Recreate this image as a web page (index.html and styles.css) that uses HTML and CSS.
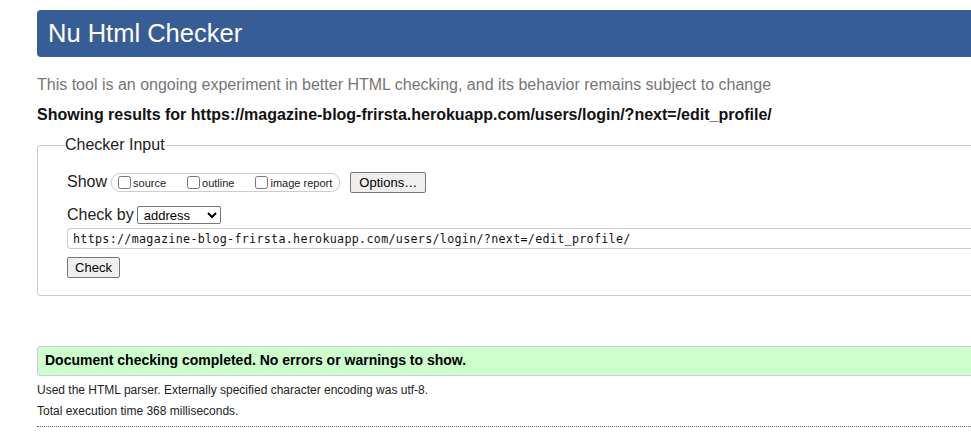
FILE: index.html
```html
<!DOCTYPE html>
<html>
<head>
<meta charset="utf-8">
<title>Nu Html Checker</title>
<link rel="stylesheet" href="styles.css">
</head>
<body>
<div class="page">
  <h1 class="banner">Nu Html Checker</h1>
  <p class="tagline">This tool is an ongoing experiment in better HTML checking, and its behavior remains subject to change</p>
  <p class="showing">Showing results for https://magazine-blog-frirsta.herokuapp.com/users/login/?next=/edit_profile/</p>
  <fieldset class="checker">
    <legend class="checker-legend">Checker Input</legend>
    <div class="show-row">
      <span class="row-label">Show</span>
      <span class="pill">
        <label class="opt"><input type="checkbox" class="cb"><span>source</span></label>
        <label class="opt"><input type="checkbox" class="cb"><span>outline</span></label>
        <label class="opt"><input type="checkbox" class="cb"><span>image report</span></label>
      </span>
      <button class="btn btn-options">Options…</button>
    </div>
    <div class="checkby-row">
      <span class="row-label">Check by</span>
      <select class="sel"><option>address</option></select>
    </div>
    <div class="url-row">
      <input class="url" type="text" value="https://magazine-blog-frirsta.herokuapp.com/users/login/?next=/edit_profile/">
    </div>
    <div class="check-row">
      <button class="btn btn-check">Check</button>
    </div>
  </fieldset>
  <p class="success">Document checking completed. No errors or warnings to show.</p>
  <p class="info">Used the HTML parser. Externally specified character encoding was utf-8.</p>
  <p class="info">Total execution time 368 milliseconds.</p>
  <hr class="dots">
</div>
</body>
</html>
```
FILE: styles.css
```css
html { overflow: hidden; }
body {
  margin: 0;
  font-family: "Liberation Sans", Arial, sans-serif;
  color: #222;
  background: #fff;
}
.page {
  width: 1000px;
  padding: 10px 0 0 37px;
}
.banner {
  margin: 0;
  height: 47px;
  box-sizing: border-box;
  background: #365d95;
  color: #fff;
  font-weight: normal;
  font-size: 25.5px;
  line-height: 47px;
  padding-left: 11px;
  border-radius: 4px 0 0 4px;
}
.tagline {
  margin: 18px 0 0;
  font-size: 16px;
  line-height: 20px;
  color: #767676;
}
.showing {
  margin: 10px 0 0;
  font-size: 16px;
  line-height: 20px;
  font-weight: bold;
  color: #111;
}
.checker {
  margin: 11px 0 0;
  padding: 18px 29px 17px 29px;
  border: 1px solid #ccc;
  border-right: none;
  border-radius: 4px 0 0 4px;
}
.checker-legend {
  padding: 0;
  margin-left: -2px;
  font-size: 16px;
  color: #222;
}
.show-row {
  display: flex;
  align-items: center;
  height: 20px;
}
.row-label {
  font-size: 16px;
  color: #222;
}
.pill {
  display: inline-flex;
  align-items: center;
  margin-left: 4px;
  height: 17px;
  border: 1px solid #ccc;
  border-radius: 9px;
  padding: 0 7px 0 4px;
}
.opt {
  display: inline-flex;
  align-items: center;
  font-size: 11px;
  margin-right: 19px;
}
.opt span { position: relative; top: 1px; }
.opt:last-child { margin-right: 0; }
.cb {
  width: 13px;
  height: 13px;
  margin: 0 2px 0 2px;
}
.btn {
  font-family: "Liberation Sans", Arial, sans-serif;
  font-size: 13px;
  height: 21px;
  padding: 0 6px;
  background: #efefef;
  border: 1px solid #767676;
  border-radius: 2px;
  color: #000;
}
.btn-options { margin-left: 10px; width: 76px; }
.checkby-row {
  display: flex;
  align-items: center;
  margin-top: 13px;
  height: 20px;
}
.sel {
  margin-left: 3px;
  width: 84px;
  height: 18px;
  font-family: "Liberation Sans", Arial, sans-serif;
  font-size: 13px;
  border: 1px solid #767676;
  border-radius: 2px;
  background: #fff;
  padding: 0 2px;
}
.url-row { margin-top: 3px; }
.url {
  width: 1000px;
  height: 21px;
  box-sizing: border-box;
  border: 1px solid #ccc;
  border-right: none;
  border-radius: 4px 0 0 4px;
  font-family: "DejaVu Sans Mono", monospace;
  font-size: 11.7px;
  letter-spacing: 0.3px;
  padding: 0 5px;
  color: #111;
}
.check-row { margin-top: 8px; }
.btn-check { width: 53px; height: 21px; }
.success {
  margin: 50px 0 0;
  height: 30px;
  box-sizing: border-box;
  background: #ccffcc;
  border: 1px solid #ccc;
  border-right: none;
  border-radius: 4px 0 0 4px;
  padding-left: 7px;
  font-size: 14px;
  font-weight: bold;
  line-height: 27px;
  color: #000;
}
.info {
  margin: 7px 0 0;
  font-size: 12px;
  line-height: 14px;
  color: #222;
}
.dots {
  margin: 8px 0 0;
  border: none;
  border-top: 1px dotted #666;
  height: 0;
}
```
